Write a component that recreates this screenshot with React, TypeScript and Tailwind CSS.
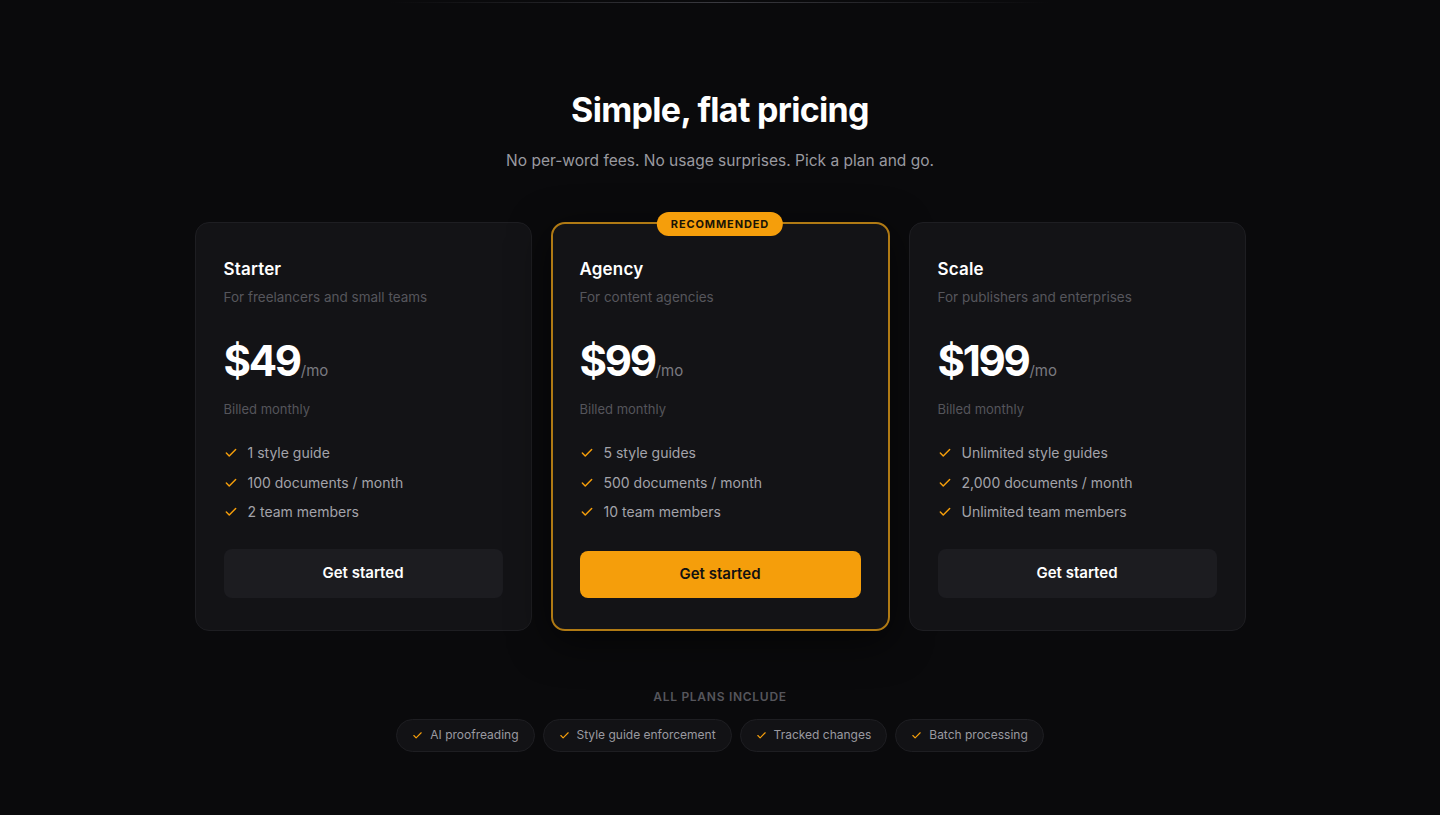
import React from "react";

const Check = ({ className = "" }: { className?: string }) => (
  <svg viewBox="0 0 24 24" fill="none" stroke="currentColor" strokeWidth={2.5} strokeLinecap="round" strokeLinejoin="round" className={className}>
    <path d="M20 6 9 17l-5-5" />
  </svg>
);

type Plan = {
  name: string;
  desc: string;
  price: string;
  features: string[];
  featured?: boolean;
};

const plans: Plan[] = [
  { name: "Starter", desc: "For freelancers and small teams", price: "$49", features: ["1 style guide", "100 documents / month", "2 team members"] },
  { name: "Agency", desc: "For content agencies", price: "$99", features: ["5 style guides", "500 documents / month", "10 team members"], featured: true },
  { name: "Scale", desc: "For publishers and enterprises", price: "$199", features: ["Unlimited style guides", "2,000 documents / month", "Unlimited team members"] },
];

const includes = ["AI proofreading", "Style guide enforcement", "Tracked changes", "Batch processing"];

function Card({ p }: { p: Plan }) {
  return (
    <div
      className={
        "relative rounded-[14px] bg-[#131316] pt-8 " +
        (p.featured
          ? "-mx-[1px] px-[27px] pb-[30px] border-2 border-[#b07a14] shadow-[0_10px_40px_rgba(0,0,0,0.6)]"
          : "px-7 pb-8 border border-[#1e1e22]")
      }
    >
      {p.featured && (
        <div className="absolute left-1/2 top-[-12px] -translate-x-1/2 rounded-full bg-[#f59e0b] px-[14px] h-[24px] flex items-center text-[11px] font-bold tracking-[0.08em] text-[#1a1406]">
          RECOMMENDED
        </div>
      )}
      <div className={"text-[17px] font-semibold text-white leading-[28px] tracking-[0.01em] " + (p.featured ? "-mt-[1px]" : "")}>{p.name}</div>
      <div className="mt-[4px] text-[13.5px] text-[#56565c]">{p.desc}</div>
      <div className="mt-[27px] flex items-baseline">
        <span className="text-[42px] font-bold leading-[52px] tracking-[-0.055em] text-white">{p.price}</span>
        <span className="ml-[1px] text-[15px] text-[#7a7a80]">/mo</span>
      </div>
      <div className="mt-[13px] text-[13px] text-[#55555b]">Billed monthly</div>
      <ul className="mt-[24px] flex flex-col gap-[9px]">
        {p.features.map((f) => (
          <li key={f} className="flex items-center gap-[10px] text-[14px] leading-[20.5px] text-[#a3a3aa]">
            <Check className="h-[14px] w-[14px] text-[#f59e0b]" />
            <span>{f}</span>
          </li>
        ))}
      </ul>
      <button
        className={
          "w-full rounded-[8px] text-[15px] font-semibold " +
          (p.featured ? "mt-[28px] h-[47px] bg-[#f59e0b] text-[#111]" : "mt-[26px] h-[49px] bg-[#1c1c20] text-white")
        }
      >
        Get started
      </button>
    </div>
  );
}

export default function App() {
  return (
    <div
      className="min-h-[815px] w-full bg-[#0a0a0c] relative overflow-hidden"
      style={{ fontFamily: "Inter, 'Noto Sans', sans-serif" }}
    >
      <div className="absolute left-1/2 top-[2px] h-px w-[660px] -translate-x-1/2 bg-gradient-to-r from-transparent via-[#3a3a40] to-transparent" />
      <div className="flex flex-col items-center pt-[88px]">
        <h1 className="text-[34px] font-bold leading-[44px] tracking-[-0.02em] text-white">Simple, flat pricing</h1>
        <p className="mt-[17px] text-[15.5px] text-[#9a9aa0]">No per-word fees. No usage surprises. Pick a plan and go.</p>
        <div className="mt-[50px] grid w-[1051px] grid-cols-3 gap-[20px]">
          {plans.map((p) => (
            <Card key={p.name} p={p} />
          ))}
        </div>
        <div className="mt-[57px] text-[12px] font-semibold tracking-[0.06em] text-[#56565c]">ALL PLANS INCLUDE</div>
        <div className="mt-[13px] flex gap-[8px]">
          {includes.map((i) => (
            <div key={i} className="flex h-[33px] items-center gap-[7px] rounded-full border border-[#1e1e22] bg-[#121215] px-[15px] text-[12px] text-[#9a9aa0]">
              <Check className="h-[11px] w-[11px] text-[#f59e0b]" />
              <span>{i}</span>
            </div>
          ))}
        </div>
      </div>
    </div>
  );
}
